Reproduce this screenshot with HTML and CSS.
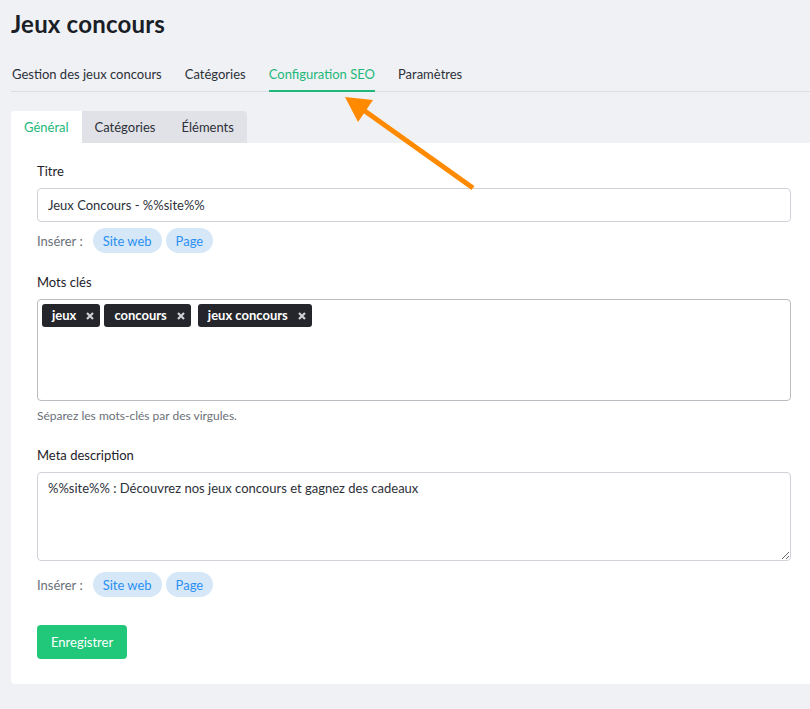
FILE: index.html
```html
<!DOCTYPE html>
<html lang="fr">
<head>
    <meta charset="UTF-8">
    <meta name="viewport" content="width=device-width, initial-scale=1.0">
    <title>Jeux concours</title>
    <link rel="stylesheet" href="styles.css">
</head>
<body>
    <div class="page">
        <h1>Jeux concours</h1>

        <!-- onglets principaux -->
        <div class="nav">
            <a class="nav-item">Gestion des jeux concours</a>
            <a class="nav-item">Catégories</a>
            <a class="nav-item active">Configuration SEO</a>
            <a class="nav-item">Paramètres</a>
        </div>

        <!-- sous-onglets -->
        <div class="subtabs">
            <a class="subtab active">Général</a>
            <a class="subtab">Catégories</a>
            <a class="subtab">Éléments</a>
        </div>

        <div class="card">
            <div class="field">
                <label class="label">Titre</label>
                <input type="text" class="input" value="Jeux Concours - %%site%%">
                <div class="insert">
                    <span>Insérer :</span>
                    <button class="chip">Site web</button>
                    <button class="chip">Page</button>
                </div>
            </div>

            <div class="field field-keys">
                <label class="label">Mots clés</label>
                <div class="tags-box">
                    <span class="tag">jeux <svg class="tag-x" viewBox="0 0 8 8"><path d="M1 1L7 7M7 1L1 7"/></svg></span>
                    <span class="tag">concours <svg class="tag-x" viewBox="0 0 8 8"><path d="M1 1L7 7M7 1L1 7"/></svg></span>
                    <span class="tag tag-far">jeux concours <svg class="tag-x" viewBox="0 0 8 8"><path d="M1 1L7 7M7 1L1 7"/></svg></span>
                </div>
                <div class="help">Séparez les mots-clés par des virgules.</div>
            </div>

            <div class="field">
                <label class="label">Meta description</label>
                <textarea class="textarea">%%site%% : Découvrez nos jeux concours et gagnez des cadeaux</textarea>
                <div class="insert insert-low">
                    <span>Insérer :</span>
                    <button class="chip">Site web</button>
                    <button class="chip">Page</button>
                </div>
            </div>

            <button class="btn-save">Enregistrer</button>
        </div>
    </div>

    <!-- flèche d'annotation -->
    <svg class="arrow" width="810" height="709" viewBox="0 0 810 709">
        <line x1="473" y1="188" x2="362" y2="109" stroke="#ff8a00" stroke-width="5" stroke-linecap="butt"/>
        <polygon points="345,97 373,100 358,122" fill="#ff8a00"/>
    </svg>
</body>
</html>
```

FILE: styles.css
```css
/* page */
body {
    margin: 0;
    background-color: #f0f1f5;
    font-family: 'Lato', 'Noto Sans', sans-serif;
    color: #1e2229;
    font-size: 13px;
}

.page {
    padding: 0 0 25px 11px;
}

h1 {
    margin: 0;
    padding-top: 8px;
    font-size: 24px;
    font-weight: 700;
    line-height: 32px;
    color: #1a1e26;
    letter-spacing: 0.2px;
}

/* onglets principaux */
.nav {
    display: flex;
    gap: 23px;
    margin-top: 19px;
    border-bottom: 1px solid #dcdee3;
    padding-left: 1px;
}

.nav-item {
    font-size: 13px;
    color: #2c3038;
    padding: 6px 0 7px;
    line-height: 18px;
    cursor: pointer;
}

.nav-item.active {
    color: #1db87a;
    border-bottom: 2px solid #1db87a;
    margin-bottom: -1px;
}

/* sous-onglets */
.subtabs {
    display: flex;
    margin-top: 19px;
}

.subtab {
    background-color: #e1e2e7;
    padding: 7px 13px;
    line-height: 18px;
    font-size: 13px;
    color: #2c3038;
    cursor: pointer;
}

.subtab.active {
    background-color: #fff;
    color: #1db87a;
    border-radius: 4px 0 0 0;
}

.subtab:last-child {
    border-radius: 0 4px 0 0;
}

/* carte */
.card {
    background-color: #fff;
    padding: 19px 19px 25px 26px;
    border-radius: 0 0 0 4px;
}

.field {
    margin-bottom: 20px;
}

.label {
    display: block;
    font-size: 13px;
    color: #1e2229;
    line-height: 18px;
    margin-bottom: 8px;
}

.input, .textarea {
    width: 100%;
    box-sizing: border-box;
    border: 1px solid #cfd3d9;
    border-radius: 4px;
    font-family: inherit;
    font-size: 13px;
    color: #2c3038;
    padding: 0 10px;
}

.input {
    height: 34px;
}

.textarea {
    height: 89px;
    padding: 7px 10px;
    resize: vertical;
    display: block;
}

.insert {
    display: flex;
    align-items: center;
    gap: 4px;
    margin-top: 6px;
    color: #6b7078;
}

.insert-low {
    margin-top: 11px;
}

.insert span {
    margin-right: 6px;
}

.chip {
    background-color: #d6e8f7;
    color: #2b8ff2;
    border: none;
    border-radius: 13px;
    height: 25px;
    padding: 0 10px;
    font-family: inherit;
    font-size: 13px;
    cursor: pointer;
}

/* mots clés */
.tags-box {
    height: 102px;
    box-sizing: border-box;
    border: 1px solid #b9bcc1;
    border-radius: 4px;
    padding: 4px;
    display: flex;
    align-items: flex-start;
    gap: 4px;
}

.tag {
    background-color: #24262b;
    color: #fff;
    font-weight: 700;
    font-size: 13px;
    height: 23px;
    line-height: 23px;
    padding: 0 6px 0 10px;
    border-radius: 3px;
    display: inline-flex;
    align-items: center;
}

.tag-x {
    width: 8px;
    height: 8px;
    margin-left: 10px;
    stroke: #cfd0d3;
    stroke-width: 2.2;
    fill: none;
}

.tag-far {
    margin-left: 3px;
}

.help {
    color: #6b7078;
    font-size: 12px;
    margin-top: 7px;
}

.field-keys {
    margin-bottom: 23px;
}

/* bouton */
.btn-save {
    margin-top: 8px;
    background-color: #22c87a;
    color: #fff;
    border: none;
    border-radius: 4px;
    height: 34px;
    padding: 0 14px;
    font-family: inherit;
    font-size: 13px;
    cursor: pointer;
}

/* annotation */
.arrow {
    position: absolute;
    top: 0;
    left: 0;
    pointer-events: none;
}
```
